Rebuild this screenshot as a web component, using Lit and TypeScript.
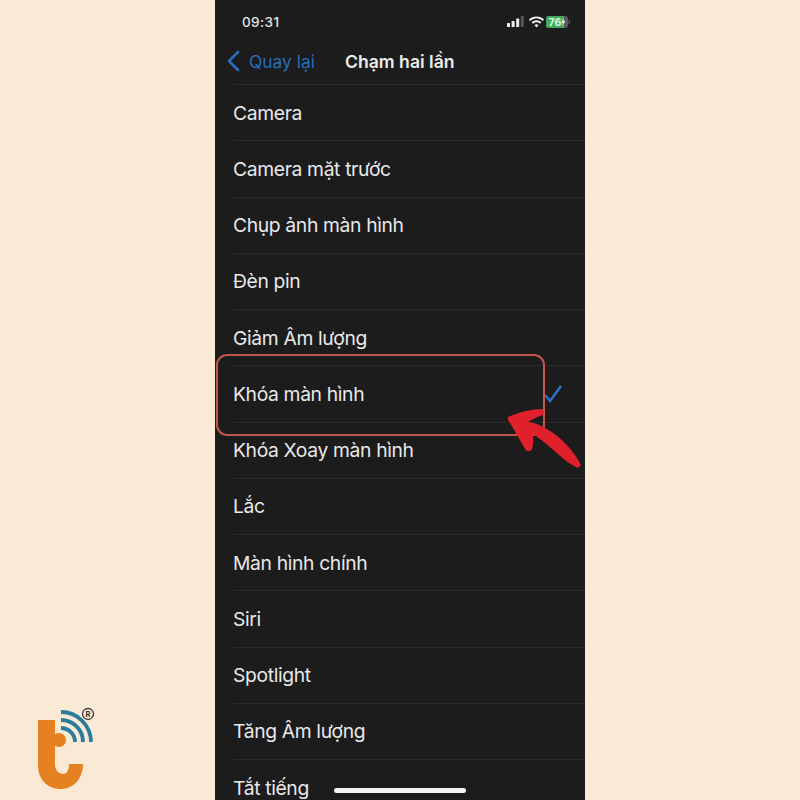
import { LitElement, html, css } from "lit";
import { customElement } from "lit/decorators.js";

const ITEMS = ["Camera","Camera mặt trước","Chụp ảnh màn hình","Đèn pin","Giảm Âm lượng","Khóa màn hình","Khóa Xoay màn hình","Lắc","Màn hình chính","Siri","Spotlight","Tăng Âm lượng","Tắt tiếng"];

@customElement("app-root")
export class AppRoot extends LitElement {
  static styles = css`
    :host { display:block; position:relative; width:800px; height:800px; overflow:hidden; background:#fae9d5; font-family:Inter,"Noto Sans",sans-serif; }
    .phone { width:370px; height:800px; margin:0 auto; background:#1c1c1d; color:#e9e9ea; overflow:hidden; display:flex; flex-direction:column; position:relative; }
    .status { height:44px; flex:none; display:flex; align-items:center; justify-content:space-between; padding:0 6px 0 27px; box-sizing:border-box; }
    .time { font-size:13.5px; font-weight:500; letter-spacing:.4px; color:#e4e4e4; }
    .status svg { display:block; }
    .nav { height:40px; flex:none; display:flex; align-items:center; padding:0 0 6px 11px; box-sizing:border-box; }
    .back { color:#276ebc; font-size:17.4px; display:flex; align-items:center; gap:9px; width:119px; flex:none; }
    .title { font-size:17.6px; font-weight:600; color:#ececec; }
    .list { flex:none; margin-left:18px; }
    .row { height:56.25px; box-sizing:border-box; border-top:1px solid #2a2a2c; display:flex; align-items:center; justify-content:space-between; font-size:19.3px; letter-spacing:-.35px; padding-right:22px; }
    .home { position:absolute; left:119px; bottom:7px; width:132px; height:5px; border-radius:3px; background:#f4f4f4; }
    .frame { position:absolute; left:216px; top:354px; width:329px; height:82px; box-sizing:border-box; border:2px solid #c1574c; border-radius:11px; }
    .arrow { position:absolute; left:500px; top:400px; }
    .logo { position:absolute; left:30px; top:705px; }
  `;
  render() {
    return html`
      <div class="phone">
        <div class="status">
          <span class="time">09:31</span>
          <svg width="72" height="14" viewBox="0 0 72 14">
            <g fill="#eee"><rect x="0" y="8" width="3" height="4" rx=".6"/><rect x="4.6" y="6" width="3" height="6" rx=".6"/><rect x="9.2" y="3.5" width="3" height="8.5" rx=".6"/></g>
            <rect x="13.8" y="1" width="3" height="11" rx=".6" fill="#555"/>
            <g fill="none" stroke="#f2f2f2" stroke-width="1.9"><path d="M22.500 5.200a10 10 0 0 1 14 0"/><path d="M25.300 8a6 6 0 0 1 8.400 0"/></g>
            <path d="M27.500 10.200a3 3 0 0 1 4 0L29.500 12.500z" fill="#f2f2f2"/>
            <rect x="39" y="1" width="22" height="12" rx="3" fill="#55595a"/>
            <path d="M42 1h15v12h-15a3 3 0 0 1-3-3v-6a3 3 0 0 1 3-3z" fill="#3fae5c"/>
            <rect x="61.500" y="5" width="1.500" height="4" rx=".7" fill="#555"/>
            <text x="41.500" y="11" font-size="10.500" font-weight="700" font-family="Inter,sans-serif" fill="#dff5e4">76</text>
            <path d="M57 2.500l-3 5h2l-1 4 3.500-5.500h-2z" fill="#e8e8e8"/>
          </svg>
        </div>
        <div class="nav">
          <div class="back">
            <svg width="14" height="22" viewBox="0 0 14 22"><path d="M12 2L3 11l9 9" fill="none" stroke="#276ebc" stroke-width="2.600" stroke-linecap="round" stroke-linejoin="round"/></svg>
            <span>Quay lại</span>
          </div>
          <span class="title">Chạm hai lần</span>
        </div>
        <div class="list">
          ${ITEMS.map((t,i)=>html`<div class="row"><span>${t}</span>${i===5?html`<svg width="20" height="20" viewBox="0 0 20 20"><path d="M2 11l5 6L18 2" fill="none" stroke="#2a72c8" stroke-width="2.500"/></svg>`:""}</div>`)}
        </div>
        <div class="home"></div>
      </div>
      <div class="frame"></div>
      <svg class="arrow" width="90" height="75" viewBox="500 400 90 75">
        <path d="M508 417C519 412 532 409 542 409C544 410 544 414 543 415C537 417 532 419 528 422C546 424 570 443 581 465L578 468C565 463 550 445 533 434C533 438 534 444 532 449C530 452 527 452 525 449C519 438 513 428 508 420Z" fill="#e0202a"/>
      </svg>
      <svg class="logo" width="70" height="90" viewBox="0 0 70 90">
        <path d="M8 15H25V60C25 65 29 69 33 69C37 69 39 65 39 59H53C53 74 43 84 31 84C17 84 8 74 8 60Z" fill="#e58120"/>
        <circle cx="29" cy="35" r="7" fill="#e58120"/>
        <g fill="none" stroke="#2a7c9d" stroke-width="3.800">
          <path d="M31 23a14 14 0 0 1 14 14"/><path d="M31 15a22 22 0 0 1 22 22"/><path d="M31 7a30 30 0 0 1 30 30"/>
        </g>
        <circle cx="58" cy="9" r="5.500" fill="none" stroke="#3a3a3a" stroke-width="1.300"/>
        <text x="58" y="11.800" text-anchor="middle" font-size="7.500" font-weight="700" fill="#333" font-family="Inter,sans-serif">R</text>
      </svg>
    `;
  }
}
